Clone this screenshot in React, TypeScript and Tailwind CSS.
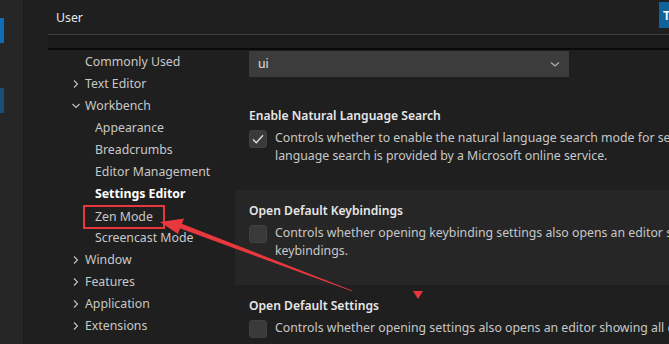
import { ReactNode } from "react";

const font = { fontFamily: '"Noto Sans", "Open Sans", sans-serif' };

function Chevron({ open }: { open?: boolean }) {
    return (
        <svg width="10" height="10" viewBox="0 0 10 10" className="shrink-0">
            {open ? (
                <path d="M1.5 3 L5 6.5 L8.5 3" fill="none" stroke="#c5c5c5" strokeWidth="1.1" />
            ) : (
                <path d="M3 1.5 L6.5 5 L3 8.5" fill="none" stroke="#c5c5c5" strokeWidth="1.1" />
            )}
        </svg>
    );
}

type TocItem = { label: string; level: 0 | 1; chevron?: "open" | "closed"; bold?: boolean; boxed?: boolean };

const toc: TocItem[] = [
    { label: "Commonly Used", level: 0 },
    { label: "Text Editor", level: 0, chevron: "closed" },
    { label: "Workbench", level: 0, chevron: "open" },
    { label: "Appearance", level: 1 },
    { label: "Breadcrumbs", level: 1 },
    { label: "Editor Management", level: 1 },
    { label: "Settings Editor", level: 1, bold: true },
    { label: "Zen Mode", level: 1, boxed: true },
    { label: "Screencast Mode", level: 1 },
    { label: "Window", level: 0, chevron: "closed" },
    { label: "Features", level: 0, chevron: "closed" },
    { label: "Application", level: 0, chevron: "closed" },
    { label: "Extensions", level: 0, chevron: "closed" },
];

function Checkbox({ checked }: { checked?: boolean }) {
    return (
        <div className="w-[18px] h-[18px] shrink-0 rounded-[3px] bg-[#3a3a3a] border border-[#404040] flex items-center justify-center mt-[1px]">
            {checked && (
                <svg width="14" height="14" viewBox="0 0 14 14">
                    <path d="M2 7.5 L5.3 10.8 L12 3.2" fill="none" stroke="#e0e0e0" strokeWidth="1.3" />
                </svg>
            )}
        </div>
    );
}

function Setting({ title, checked, highlight, children }: { title: string; checked?: boolean; highlight?: boolean; children: ReactNode }) {
    return (
        <div className={`shrink-0 h-[95px] pl-[14px] pt-[12px] ${highlight ? "bg-[#262626]" : ""}`}>
            <div className="h-[18px] leading-[18px] text-[12.1px] font-semibold text-[#e7e7e7] whitespace-nowrap">{title}</div>
            <div className="flex gap-[8px] mt-[4px]">
                <Checkbox checked={checked} />
                <div className="text-[12.3px] leading-[18px] text-[#c8c8c8] whitespace-nowrap">{children}</div>
            </div>
        </div>
    );
}

export default function App() {
    return (
        <div className="relative w-[669px] h-[344px] overflow-hidden bg-[#1f1f1f] flex" style={font}>
            {/* activity bar */}
            <div className="w-[24px] shrink-0 bg-[#262626] border-r border-[#1c1c1c] flex flex-col">
                <div className="w-[4px] h-[25px] mt-[18px] bg-[#0f6cb5]" />
                <div className="w-[4px] h-[25px] mt-[45px] bg-[#174f7a]" />
            </div>

            <div className="flex-1 flex flex-col pl-[24px] min-w-0">
                {/* header with tab */}
                <div className="h-[35px] flex items-start justify-between border-b border-[#3e3e3e] shrink-0">
                    <div className="h-[35px] w-[42px] flex flex-col">
                        <div className="flex-1 pl-[8px] pt-[9px] text-[12.3px] text-[#e7e7e7] leading-[18px]">User</div>
                        <div className="h-[1px] bg-[#d0d0d0] mb-[-1px]" />
                    </div>
                    <div className="mt-[2px] mr-[-19px] w-[29px] h-[26px] bg-[#0e639c] text-white text-[13px] font-semibold leading-[26px] pl-[4px]">T</div>
                </div>
                <div className="h-[15px] bg-[#1b1b1b] border-b-2 border-[#0a0a0a] shrink-0" />

                <div className="flex flex-1 min-h-0">
                    {/* table of contents */}
                    <div className="w-[187px] shrink-0 flex flex-col pt-[1px]">
                        {toc.map((item) => (
                            <div
                                key={item.label}
                                className={`shrink-0 h-[22px] flex items-center text-[12.3px] whitespace-nowrap ${item.level === 1 ? "pl-[47px]" : "pl-[23px]"}`}
                            >
                                {item.level === 0 && (
                                    <div className="w-[14px] flex items-center">{item.chevron && <Chevron open={item.chevron === "open"} />}</div>
                                )}
                                <span
                                    className={`${item.bold ? "font-bold text-white" : "text-[#c8c8c8]"} ${item.boxed ? "border-2 border-[#e8383d] px-[10px] ml-[-12px] h-[24px] leading-[20px] mt-[1px]" : ""}`}
                                >
                                    {item.label}
                                </span>
                            </div>
                        ))}
                    </div>

                    {/* settings list */}
                    <div className="flex-1 flex flex-col min-w-0">
                        <div className="shrink-0 h-[45px] pl-[14px] pt-[1px]">
                            <div className="w-[320px] h-[26px] bg-[#3c3c3c] flex items-center justify-between pl-[9px] pr-[8px]">
                                <span className="text-[12.3px] text-[#e0e0e0]">ui</span>
                                <svg width="12" height="12" viewBox="0 0 12 12">
                                    <path d="M2 4.5 L6 8 L10 4.5" fill="none" stroke="#b0b0b0" strokeWidth="1.2" />
                                </svg>
                            </div>
                        </div>
                        <Setting title="Enable Natural Language Search" checked>
                            <div>Controls whether to enable the natural language search mode for settings. The natural</div>
                            <div>language search is provided by a Microsoft online service.</div>
                        </Setting>
                        <Setting title="Open Default Keybindings" highlight>
                            <div>Controls whether opening keybinding settings also opens an editor showing all default</div>
                            <div>keybindings.</div>
                        </Setting>
                        <Setting title="Open Default Settings">
                            <div>Controls whether opening settings also opens an editor showing all default settings.</div>
                        </Setting>
                    </div>
                </div>
            </div>

            {/* annotation overlay */}
            <svg className="absolute inset-0 pointer-events-none" width="669" height="344" viewBox="0 0 669 344">
                <polygon points="176,221.5 352,290.4 352.6,291.6 175,226.5" fill="#e8383d" />
                <polygon points="160,222 184,218.5 178,234" fill="#e8383d" />
                <polygon points="413,291 423,291 418,299" fill="#e8383d" />
            </svg>
        </div>
    );
}
